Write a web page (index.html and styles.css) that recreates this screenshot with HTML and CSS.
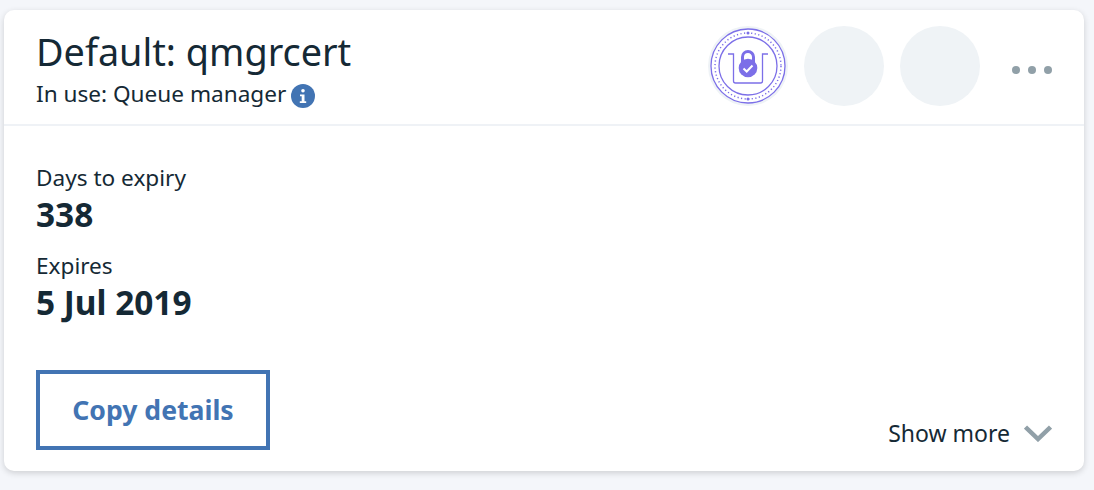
FILE: index.html
```html
<!DOCTYPE html>
<html lang="en">
<head>
<meta charset="utf-8">
<title>Certificate</title>
<link rel="stylesheet" href="styles.css">
</head>
<body>
<section class="card">
  <header class="card-head">
    <div class="titles">
      <h1 class="title">Default: qmgrcert</h1>
      <div class="subtitle">
        <span>In use: Queue manager</span>
        <svg class="info" viewBox="0 0 24 24" width="24" height="24" aria-hidden="true">
          <circle cx="12" cy="12" r="12" fill="#4274b3"/>
          <circle cx="12" cy="6.800" r="1.800" fill="#fff"/>
          <path d="M9 10.400h4.500v6.800h1.700v1.900H8.800v-1.900h1.900v-4.900H9z" fill="#fff"/>
        </svg>
      </div>
    </div>
    <div class="actions">
      <svg class="badge" viewBox="0 0 80 80" width="80" height="80" aria-hidden="true">
        <circle cx="40" cy="40" r="40" fill="#eff3f6"/>
        <circle cx="40" cy="40" r="37" fill="#fff" stroke="#7c6fe8" stroke-width="1.300"/>
        <circle cx="40" cy="40" r="33" fill="none" stroke="#7c6fe8" stroke-width="1.500" stroke-dasharray="1.200 2.400"/>
        <circle cx="40" cy="40" r="29" fill="none" stroke="#7c6fe8" stroke-width="1.300"/>
        <path d="M20 28h5.500v27a2 2 0 0 0 2 2h25a2 2 0 0 0 2-2V28H60" fill="none" stroke="#7c6fe8" stroke-width="1.300"/>
        <path d="M34.500 36v-5a5.500 5.500 0 0 1 11 0v5" fill="none" stroke="#7c6fe8" stroke-width="3"/>
        <circle cx="40" cy="42" r="9.300" fill="#7c6fe8"/>
        <path d="M35.500 42.500l3.200 3 5.800-6" fill="none" stroke="#fff" stroke-width="2"/>
        <circle cx="40" cy="7" r="1.500" fill="#7c6fe8"/>
        <circle cx="40" cy="73" r="1.500" fill="#7c6fe8"/>
      </svg>
      <span class="placeholder"></span>
      <span class="placeholder"></span>
      <div class="more" aria-label="More"><i></i><i></i><i></i></div>
    </div>
  </header>
  <div class="card-body">
    <div class="field-label">Days to expiry</div>
    <div class="field-value">338</div>
    <div class="field-label second">Expires</div>
    <div class="field-value">5 Jul 2019</div>
    <div class="card-foot">
      <button class="copy" type="button">Copy details</button>
      <div class="show-more">
        <span>Show more</span>
        <svg viewBox="0 0 28 18" width="28" height="18" aria-hidden="true">
          <path d="M1.500 3l12.500 12L26.500 3" fill="none" stroke="#91a0a8" stroke-width="4.500"/>
        </svg>
      </div>
    </div>
  </div>
</section>
</body>
</html>
```
FILE: styles.css
```css
* { box-sizing: border-box; }
html, body { height: 100%; }
body {
  margin: 0;
  padding: 10px 10px 0 4px;
  background: #f4f6fa;
  color: #152935;
  font-family: "Noto Sans", "Open Sans", sans-serif;
  overflow: hidden;
}
.card {
  height: 461px;
  background: #fff;
  border-radius: 10px;
  box-shadow: 0 2px 6px rgba(0, 0, 0, 0.16);
  display: flex;
  flex-direction: column;
}
.card-head {
  height: 116px;
  padding: 16px 32px 0 32px;
  border-bottom: 2px solid #eff2f6;
  display: flex;
  justify-content: space-between;
  align-items: flex-start;
}
.title {
  margin: 0;
  font-size: 37.800px;
  font-weight: 400;
  line-height: 52px;
}
.subtitle {
  display: flex;
  align-items: flex-start;
  gap: 5px;
  font-size: 22.600px;
  line-height: 30px;
  padding-top: 1px;
}
.info {
  display: block;
  margin-top: 5px;
}
.actions {
  display: flex;
  align-items: flex-start;
  gap: 16px;
}
.badge { display: block; }
.placeholder {
  width: 80px;
  height: 80px;
  border-radius: 50%;
  background: #eff3f6;
}
.more {
  display: flex;
  gap: 8px;
  margin: 40px 0 0 16px;
}
.more i {
  width: 8px;
  height: 8px;
  border-radius: 50%;
  background: #91a0a8;
}
.card-body {
  flex: 1;
  padding: 38px 32px 21px 32px;
  display: flex;
  flex-direction: column;
}
.field-label {
  font-size: 22.600px;
  line-height: 28px;
}
.second { margin-top: 16px; }
.field-value {
  font-size: 33.400px;
  font-weight: 700;
  line-height: 44px;
}
.card-foot {
  margin-top: auto;
  display: flex;
  justify-content: space-between;
  align-items: flex-end;
}
.copy {
  width: 234px;
  height: 80px;
  border: 4px solid #4274b3;
  background: #fff;
  color: #4274b3;
  font: 700 26.600px "Noto Sans", sans-serif;
  padding: 0;
}
.show-more {
  display: flex;
  align-items: center;
  gap: 14px;
  font-size: 23px;
  line-height: 30px;
  margin-bottom: 2px;
}
.show-more svg { display: block; }
```
